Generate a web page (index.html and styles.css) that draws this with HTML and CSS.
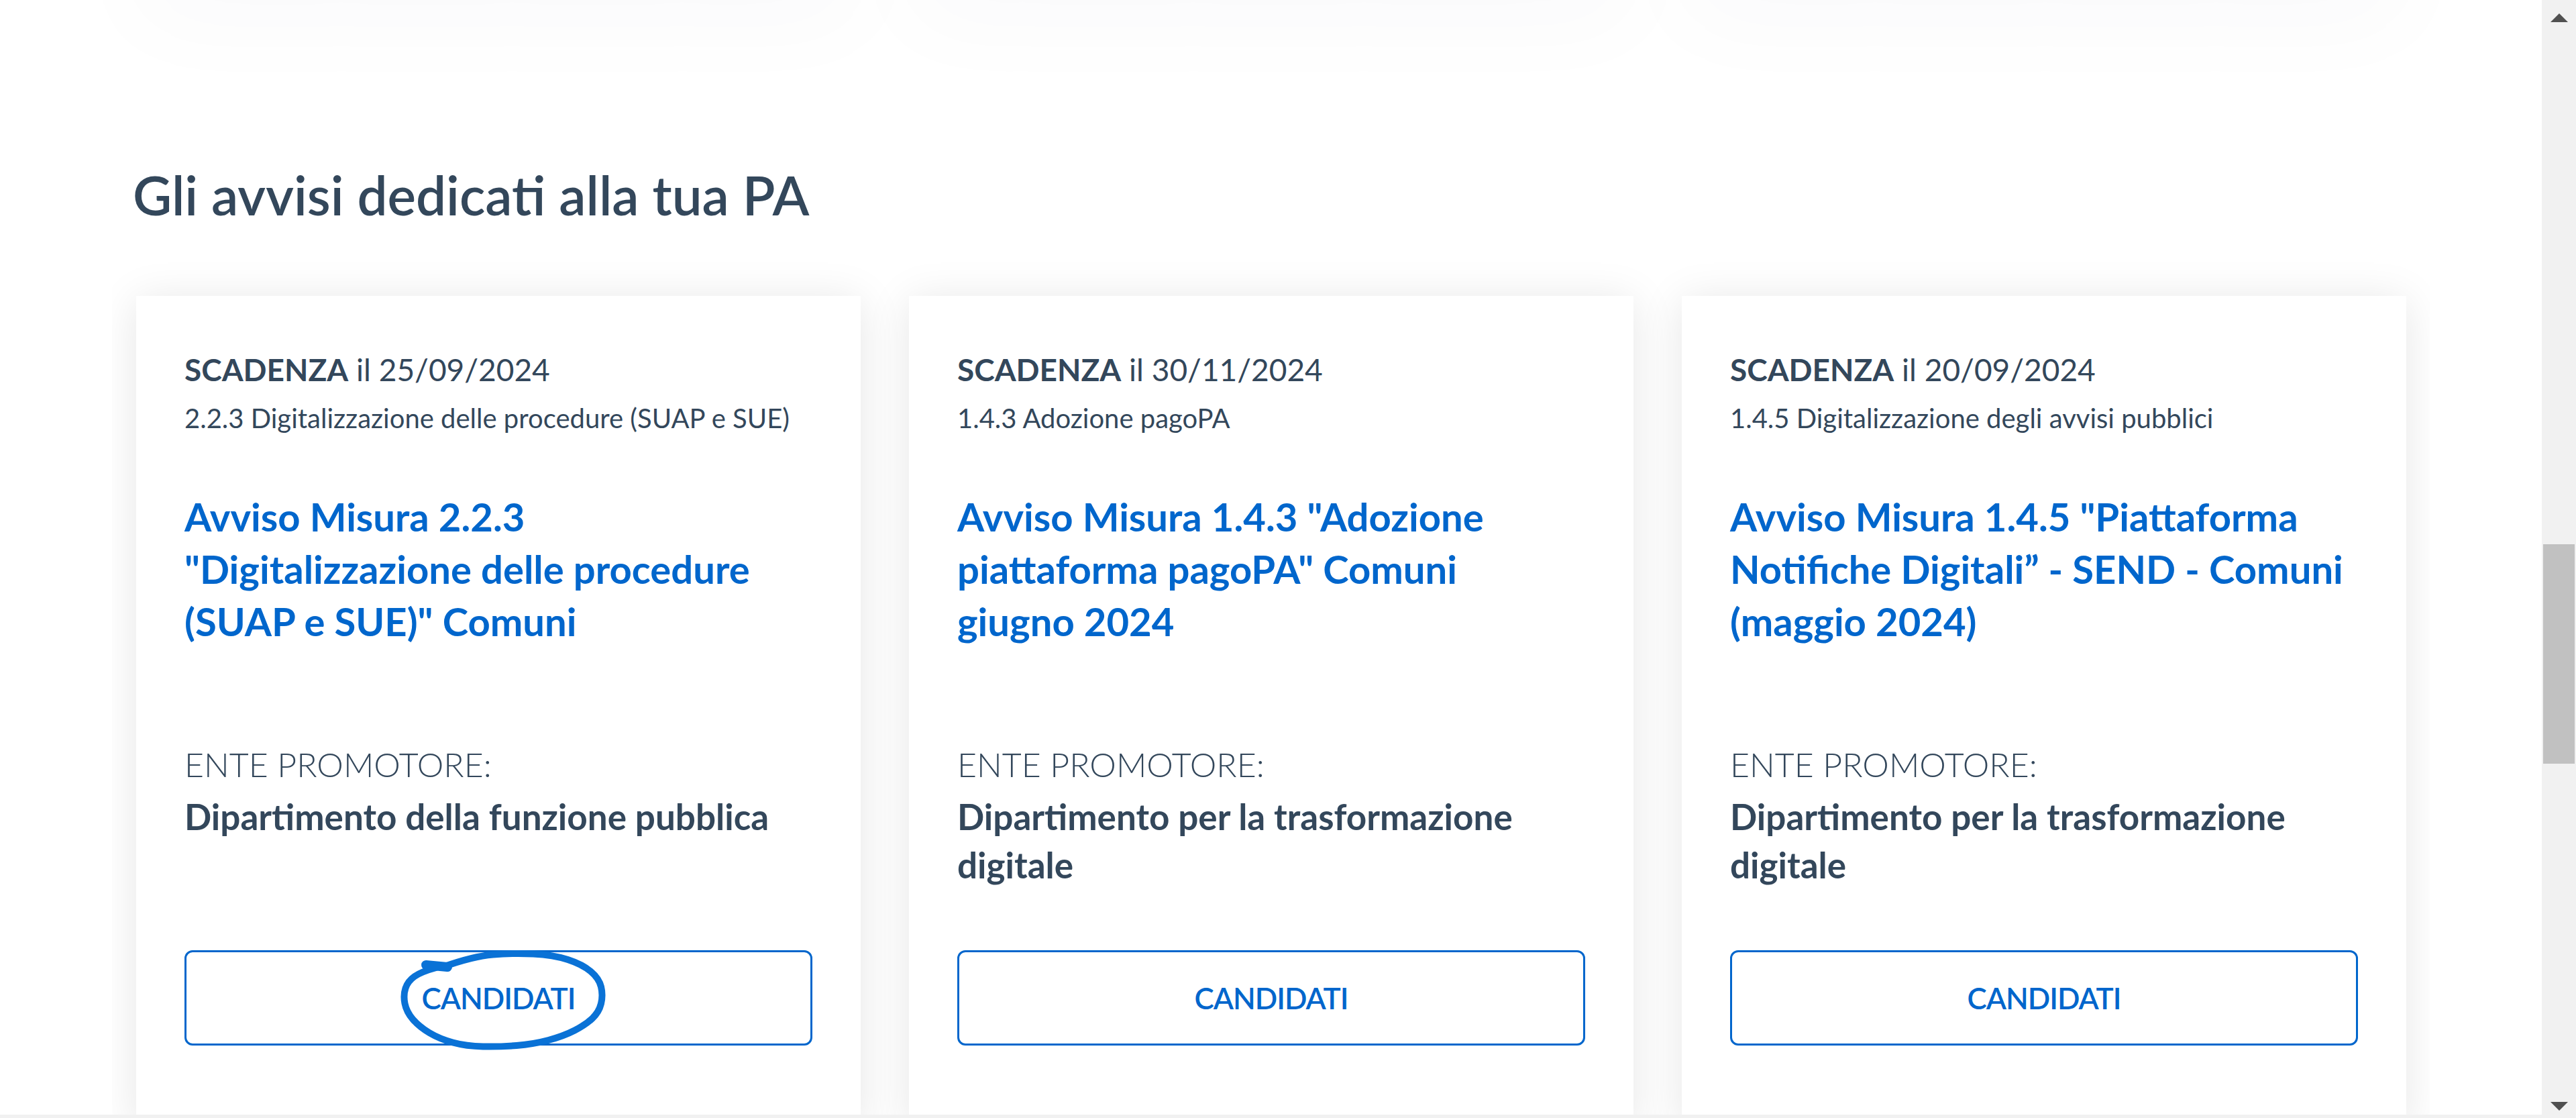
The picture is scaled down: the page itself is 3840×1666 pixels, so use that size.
FILE: index.html
```html
<!DOCTYPE html>
<html lang="it">
  <head>
    <meta charset="UTF-8" />
    <meta name="viewport" content="width=device-width, initial-scale=1.0" />
    <title>Gli avvisi dedicati alla tua PA</title>
    <link rel="stylesheet" href="styles.css">
  </head>
  <body>
    <div class="window">
      <div class="viewport">
        <main class="content">
          <!-- bottom of the previous row, only its shadow shows -->
          <div class="prev-row">
            <div class="ghost"></div>
            <div class="ghost"></div>
            <div class="ghost"></div>
          </div>

          <h2 class="section-title">Gli avvisi dedicati alla tua PA</h2>

          <div class="slider">
            <div class="cards">
              <article class="card">
                <p class="deadline"><strong>SCADENZA</strong> il 25/09/2024</p>
                <p class="measure">2.2.3 Digitalizzazione delle procedure (SUAP e SUE)</p>
                <h3 class="card-title">
                  <a href="#">Avviso Misura 2.2.3 "Digitalizzazione delle procedure (SUAP e SUE)" Comuni</a>
                </h3>
                <p class="promoter-label">ENTE PROMOTORE:</p>
                <p class="promoter">Dipartimento della funzione pubblica</p>
                <a class="btn" href="#">CANDIDATI
                  <svg class="mark" width="340" height="180" viewBox="580 1400 340 180">
                    <path d="M660 1441 Q705 1425 735 1422.5 Q765 1420 795 1421.5 Q825 1423 846.5 1430 Q868 1437 880.5 1447.5 Q893 1458 896 1470.5 Q899 1483 896 1495.5 Q893 1508 883 1517.5 Q873 1527 856.5 1535.5 Q840 1544 817.5 1550 Q795 1556 770 1558 Q745 1560 720 1559.5 Q695 1559 675 1553.5 Q655 1548 640 1539 Q625 1530 615.5 1519 Q606 1508 603.5 1495.5 Q601 1483 604.5 1472.5 Q608 1462 618 1455 Q628 1448 650 1442" fill="none" stroke="#0a72d6" stroke-width="10" stroke-linecap="round" stroke-linejoin="round" />
                    <path d="M635 1438 L667 1441" fill="none" stroke="#0a72d6" stroke-width="14" stroke-linecap="round" />
                  </svg>
                </a>
              </article>

              <article class="card">
                <p class="deadline"><strong>SCADENZA</strong> il 30/11/2024</p>
                <p class="measure">1.4.3 Adozione pagoPA</p>
                <h3 class="card-title">
                  <a href="#">Avviso Misura 1.4.3 "Adozione piattaforma pagoPA" Comuni giugno 2024</a>
                </h3>
                <p class="promoter-label">ENTE PROMOTORE:</p>
                <p class="promoter">Dipartimento per la trasformazione digitale</p>
                <a class="btn" href="#">CANDIDATI</a>
              </article>

              <article class="card">
                <p class="deadline"><strong>SCADENZA</strong> il 20/09/2024</p>
                <p class="measure">1.4.5 Digitalizzazione degli avvisi pubblici</p>
                <h3 class="card-title">
                  <a href="#">Avviso Misura 1.4.5 "Piattaforma Notifiche Digitali” - SEND - Comuni (maggio 2024)</a>
                </h3>
                <p class="promoter-label">ENTE PROMOTORE:</p>
                <p class="promoter">Dipartimento per la trasformazione digitale</p>
                <a class="btn" href="#">CANDIDATI</a>
              </article>
            </div>
          </div>
        </main>
        <div class="hbar"></div>
      </div>

      <div class="scrollbar">
        <div class="sb-btn sb-up"></div>
        <div class="sb-track"><div class="sb-thumb"></div></div>
        <div class="sb-btn sb-down"></div>
      </div>
    </div>
  </body>
</html>
```

FILE: styles.css
```css
* {
  margin: 0px;
  padding: 0px;
  box-sizing: border-box;
}
body {
  font-family: "Lato", "Liberation Sans", sans-serif;
  color: #33475b;
  background-color: #fff;
  overflow: hidden;
}
.window {
  display: flex;
  height: 1666px;
}
.viewport {
  flex: 1;
  min-width: 0;
  display: flex;
  flex-direction: column;
}
.content {
  flex: 1;
  overflow: hidden;
  padding: 0 203px;
}
.hbar {
  height: 5px;
  background-color: #f1f1f1;
}

/* previous row, out of view */
.prev-row {
  display: grid;
  grid-template-columns: repeat(3, 1080px);
  column-gap: 72px;
  margin-top: -320px;
}
.ghost {
  height: 300px;
  background-color: #fff;
  box-shadow: 0 60px 140px rgba(23, 50, 77, 0.025);
}

.section-title {
  margin-top: 260px;
  margin-left: -5px;
  font-size: 80px;
  line-height: 100px;
  font-weight: 600;
}

.slider {
  margin: 41px -36px 0;
  padding: 60px 36px 0;
  overflow: hidden;
}
.cards {
  display: grid;
  grid-template-columns: repeat(3, 1080px);
  column-gap: 72px;
}
.card {
  background-color: #fff;
  box-shadow: 0 6px 60px rgba(0, 0, 0, 0.1);
  padding: 74px 72px 120px;
  display: flex;
  flex-direction: column;
}
.deadline {
  font-size: 46px;
  line-height: 72px;
}
.deadline strong {
  font-weight: 700;
}
.measure {
  margin-top: 6px;
  font-size: 40px;
  line-height: 60px;
}
.card-title {
  margin-top: 78px;
  padding-right: 14px;
  font-size: 58px;
  line-height: 78px;
  font-weight: 700;
}
.card-title a {
  color: #0066cc;
  text-decoration: none;
}
.promoter-label {
  margin-top: 132px;
  font-size: 50px;
  line-height: 84px;
  font-weight: 300;
}
.promoter {
  margin-bottom: 91px;
  font-size: 53px;
  line-height: 72px;
  font-weight: 700;
}
.btn {
  position: relative;
  margin-top: auto;
  height: 142px;
  display: flex;
  align-items: center;
  justify-content: center;
  border: 3px solid #0066cc;
  border-radius: 12px;
  color: #0066cc;
  font-size: 44px;
  font-weight: 600;
  letter-spacing: -1px;
  text-decoration: none;
}
/* hand drawn circle on the first button */
.mark {
  position: absolute;
  left: 302px;
  top: -19px;
  overflow: visible;
  pointer-events: none;
}

/* browser scrollbar */
.scrollbar {
  width: 51px;
  background-color: #f1f1f1;
  display: flex;
  flex-direction: column;
}
.sb-btn {
  height: 51px;
  display: flex;
  justify-content: center;
  align-items: flex-start;
}
.sb-up {
  padding-top: 20px;
}
.sb-down {
  padding-top: 27px;
}
.sb-up::before {
  content: "";
  border-left: 13px solid transparent;
  border-right: 13px solid transparent;
  border-bottom: 13px solid #505050;
}
.sb-down::before {
  content: "";
  border-left: 13px solid transparent;
  border-right: 13px solid transparent;
  border-top: 13px solid #505050;
}
.sb-track {
  flex: 1;
}
.sb-thumb {
  margin: 760px 2px 0;
  height: 327px;
  background-color: #c1c1c1;
}
```
